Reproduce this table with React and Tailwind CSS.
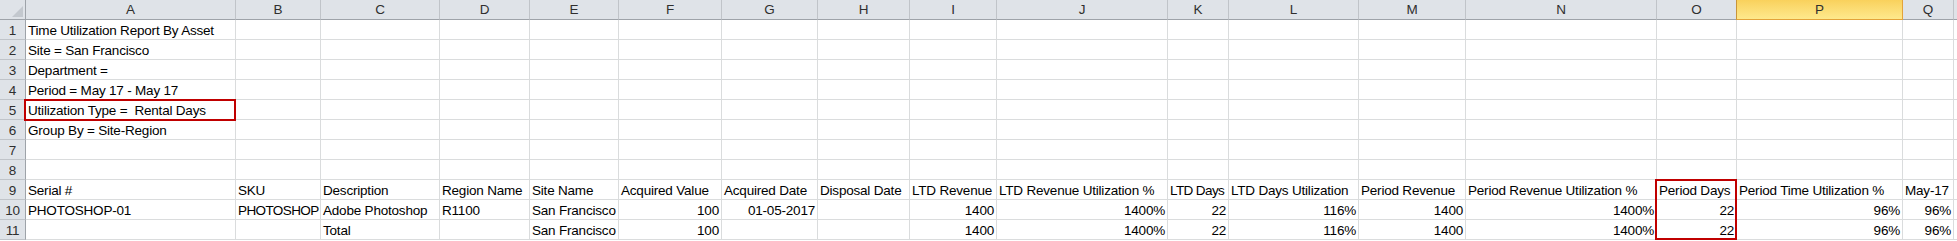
import React from 'react'

// column letter + width (px, right gridline included)
const COLS = [
  { l: 'A', w: 210 }, { l: 'B', w: 85 }, { l: 'C', w: 119 }, { l: 'D', w: 90 },
  { l: 'E', w: 89 }, { l: 'F', w: 103 }, { l: 'G', w: 96 }, { l: 'H', w: 92 },
  { l: 'I', w: 87 }, { l: 'J', w: 171 }, { l: 'K', w: 61 }, { l: 'L', w: 130 },
  { l: 'M', w: 107 }, { l: 'N', w: 191 }, { l: 'O', w: 80 }, { l: 'P', w: 166 },
  { l: 'Q', w: 51 }, { l: '', w: 0 },
]

const R = v => ({ v, r: true })
// uppercase-heavy text needs tighter spacing to fit the narrow columns
const T = v => ({ v, t: true })

const ROWS = [
  ['Time Utilization Report By Asset'],
  ['Site = San Francisco'],
  ['Department ='],
  ['Period = May 17 - May 17'],
  ['Utilization Type =  Rental Days'],
  ['Group By = Site-Region'],
  [],
  [],
  ['Serial #', 'SKU', 'Description', 'Region Name', 'Site Name', 'Acquired Value', 'Acquired Date', 'Disposal Date', 'LTD Revenue', 'LTD Revenue Utilization %', T('LTD Days'), 'LTD Days Utilization', 'Period Revenue', 'Period Revenue Utilization %', 'Period Days', 'Period Time Utilization %', 'May-17'],
  ['PHOTOSHOP-01', T('PHOTOSHOP'), 'Adobe Photoshop', 'R1100', 'San Francisco', R('100'), R('01-05-2017'), '', R('1400'), R('1400%'), R('22'), R('116%'), R('1400'), R('1400%'), R('22'), R('96%'), R('96%')],
  ['', '', 'Total', '', 'San Francisco', R('100'), '', '', R('1400'), R('1400%'), R('22'), R('116%'), R('1400'), R('1400%'), R('22'), R('96%'), R('96%')],
]

function Cell({ cell }) {
  const obj = typeof cell === 'object' && cell
  const v = obj ? cell.v : cell
  return (
    <div className={`h-5 border-r border-b border-[#dadcdd] flex items-end overflow-hidden whitespace-pre leading-4 px-[2px] ${obj?.r ? 'justify-end' : ''} ${obj?.t ? 'tracking-[-0.6px]' : ''}`}>
      {v}
    </div>
  )
}

export default function App() {
  return (
    <div
      className="relative w-[1957px] h-[241px] bg-white overflow-hidden text-[13.5px] tracking-[-0.2px] text-black"
      style={{ fontFamily: '"Liberation Sans", Arial, sans-serif' }}
    >
      <div className="grid grid-cols-[26px_210px_85px_119px_90px_89px_103px_96px_92px_87px_171px_61px_130px_107px_191px_80px_166px_51px_1fr]">
        {/* corner */}
        <div className="relative h-5 bg-[#dfe3e8] border-r border-b border-[#9ea3a9]">
          <div className="absolute right-[2px] bottom-[2px] w-0 h-0 border-l-[11px] border-l-transparent border-b-[11px] border-b-[#c3c8ce]" />
        </div>
        {COLS.map(c =>
          c.l === 'P' ? (
            <div key="P" className="h-5 leading-[19px] text-center text-[#2f2f2f] bg-gradient-to-b from-[#f9d15c] to-[#fee98c] border-b border-r border-[#e3a33a] border-l border-l-[#c8953a] -ml-px">
              P
            </div>
          ) : (
            <div key={c.l || 'x'} className="h-5 leading-[19px] text-center text-[#2f2f2f] bg-[#dfe3e8] border-r border-b border-r-[#c0c4c9] border-b-[#9ea3a9]">
              {c.l}
            </div>
          )
        )}

        {ROWS.map((row, i) => (
          <React.Fragment key={i}>
            <div className="h-5 bg-[#dfe3e8] border-r border-b border-r-[#9ea3a9] border-b-[#c0c4c9] flex items-end justify-center leading-4 text-[#2f2f2f]">
              {i + 1}
            </div>
            {COLS.map((c, j) => (
              <Cell key={j} cell={row[j] ?? ''} />
            ))}
          </React.Fragment>
        ))}
      </div>

      {/* highlight boxes */}
      <div className="absolute left-[24px] top-[99px] w-[212px] h-[22px] border-2 border-[#c00000]" />
      <div className="absolute left-[1655px] top-[179px] w-[82px] h-[61px] border-2 border-[#c00000]" />
    </div>
  )
}
